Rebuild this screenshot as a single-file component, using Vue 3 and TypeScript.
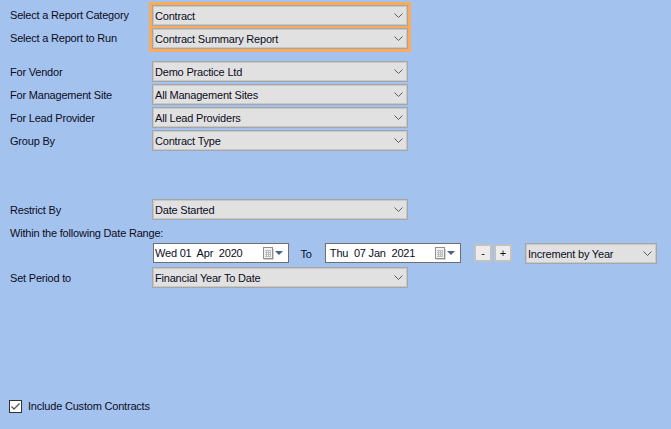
<script setup lang="ts">
import { ref } from "vue";

type Field = { label: string; value: string };

const highlighted: Field[] = [
  { label: "Select a Report Category", value: "Contract" },
  { label: "Select a Report to Run", value: "Contract Summary Report" },
];

const filters: Field[] = [
  { label: "For Vendor", value: "Demo Practice Ltd" },
  { label: "For Management Site", value: "All Management Sites" },
  { label: "For Lead Provider", value: "All Lead Providers" },
  { label: "Group By", value: "Contract Type" },
];

const fromDate = "Wed 01\u00a0 Apr\u00a0 2020";
const toDate = "\u00a0Thu\u00a0 07 Jan\u00a0 2021";

const includeCustom = ref(true);
</script>

<template>
  <div class="page">
    <div class="top">
      <div class="top-labels">
        <div v-for="f in highlighted" :key="f.label" class="label">{{ f.label }}</div>
      </div>
      <div class="highlight">
        <div v-for="f in highlighted" :key="f.label" class="combo">
          <span>{{ f.value }}</span>
          <svg class="chev" width="9" height="5" viewBox="0 0 9 5"><path d="M0.500 0.500 L4.500 4.500 L8.500 0.500" /></svg>
        </div>
      </div>
    </div>

    <div class="filters">
      <div v-for="f in filters" :key="f.label" class="row">
        <div class="label">{{ f.label }}</div>
        <div class="combo">
          <span>{{ f.value }}</span>
          <svg class="chev" width="9" height="5" viewBox="0 0 9 5"><path d="M0.500 0.500 L4.500 4.500 L8.500 0.500" /></svg>
        </div>
      </div>
    </div>

    <div class="restrict">
      <div class="row">
        <div class="label">Restrict By</div>
        <div class="combo">
          <span>Date Started</span>
          <svg class="chev" width="9" height="5" viewBox="0 0 9 5"><path d="M0.500 0.500 L4.500 4.500 L8.500 0.500" /></svg>
        </div>
      </div>
      <div class="label range-label">Within the following Date Range:</div>
      <div class="date-row">
        <div class="date">
          <span class="date-text">{{ fromDate }}</span>
          <svg class="cal" width="20" height="13" viewBox="0 0 20 13">
            <rect x="0.500" y="0.500" width="9" height="11" fill="#f4f4f4" stroke="#8f8f8f" />
            <path d="M2 3.500H8M2 5.500H8M2 7.500H8M2 9.500H8M3.500 3V10M5.500 3V10M7.500 3V10" stroke="#bcbcbc" fill="none" />
            <path d="M10.500 12.500V2M1 12.500H10" stroke="#d4d4d4" fill="none" />
            <path d="M12 4H20L16 8Z" fill="#4a5f86" />
          </svg>
        </div>
        <div class="to">To</div>
        <div class="date">
          <span class="date-text">{{ toDate }}</span>
          <svg class="cal" width="20" height="13" viewBox="0 0 20 13">
            <rect x="0.500" y="0.500" width="9" height="11" fill="#f4f4f4" stroke="#8f8f8f" />
            <path d="M2 3.500H8M2 5.500H8M2 7.500H8M2 9.500H8M3.500 3V10M5.500 3V10M7.500 3V10" stroke="#bcbcbc" fill="none" />
            <path d="M10.500 12.500V2M1 12.500H10" stroke="#d4d4d4" fill="none" />
            <path d="M12 4H20L16 8Z" fill="#4a5f86" />
          </svg>
        </div>
        <button class="step minus">-</button>
        <button class="step plus">+</button>
        <div class="combo increment">
          <span>Increment by Year</span>
          <svg class="chev" width="9" height="5" viewBox="0 0 9 5"><path d="M0.500 0.500 L4.500 4.500 L8.500 0.500" /></svg>
        </div>
      </div>
      <div class="row period">
        <div class="label">Set Period to</div>
        <div class="combo">
          <span>Financial Year To Date</span>
          <svg class="chev" width="9" height="5" viewBox="0 0 9 5"><path d="M0.500 0.500 L4.500 4.500 L8.500 0.500" /></svg>
        </div>
      </div>
    </div>

    <label class="check">
      <span class="box">
        <svg v-if="includeCustom" width="11" height="11" viewBox="0 0 11 11"><path d="M1.500 5.500 L4 8 L9.500 2.500" /></svg>
      </span>
      <span class="check-text">Include Custom Contracts</span>
    </label>
  </div>
</template>

<style>
html,
body {
  margin: 0;
  background: #a4c2ee;
}
</style>

<style scoped>
.page {
  box-sizing: border-box;
  width: 671px;
  height: 429px;
  padding: 2px 0 0 10px;
  display: flex;
  flex-direction: column;
  background: #a4c2ee;
  color: #0c0c1c;
  font-family: "Liberation Sans", Arial, sans-serif;
  font-size: 11px;
  letter-spacing: -0.2px;
  overflow: hidden;
}
.top {
  display: flex;
}
.top-labels {
  width: 139px;
  padding-top: 2px;
  display: flex;
  flex-direction: column;
  gap: 2px;
}
.label {
  height: 21px;
  line-height: 23px;
  white-space: nowrap;
}
.highlight {
  width: 256px;
  padding: 3px;
  display: flex;
  flex-direction: column;
  gap: 2px;
  background: #fdab5a;
}
.combo {
  box-sizing: border-box;
  flex: none;
  width: 256px;
  height: 21px;
  padding: 0 4px 0 2px;
  display: flex;
  align-items: center;
  justify-content: space-between;
  background: #e1e1e1;
  border: 1px solid #a6a6a6;
  box-shadow: inset 0 0 0 1px #c8c8c8;
  white-space: pre;
}
.chev path {
  fill: none;
  stroke: #5c5c5c;
  stroke-width: 1;
}
.filters {
  margin-top: 9px;
  display: flex;
  flex-direction: column;
  gap: 2px;
}
.row {
  display: grid;
  grid-template-columns: 142px 256px;
}
.restrict {
  margin-top: 48px;
}
.range-label {
  margin-top: 2px;
}
.date-row {
  padding-left: 143px;
  display: flex;
  align-items: flex-start;
  height: 21px;
}
.date {
  box-sizing: border-box;
  width: 136px;
  height: 20px;
  padding: 0 5px 0 1px;
  display: flex;
  align-items: center;
  justify-content: space-between;
  background: #fff;
  border: 1px solid #6f6f6f;
}
.date-text {
  white-space: pre;
}
.cal {
  flex: none;
}
.to {
  width: 36px;
  padding-right: 2px;
  box-sizing: border-box;
  text-align: center;
  line-height: 22px;
}
.step {
  box-sizing: border-box;
  width: 18px;
  height: 18px;
  margin-top: 1px;
  padding: 0;
  background: #ececec;
  border: 2px solid #c2c2c2;
  font: inherit;
  line-height: 12px;
  color: #111;
}
.minus {
  margin-left: 13px;
}
.plus {
  margin-left: 2px;
}
.increment {
  width: 132px;
  margin-left: 13px;
}
.period {
  margin-top: 3px;
}
.check {
  margin-top: auto;
  margin-bottom: 16px;
  margin-left: -1px;
  display: flex;
  align-items: flex-start;
  gap: 6px;
  height: 13px;
}
.box {
  box-sizing: border-box;
  width: 13px;
  height: 13px;
  display: flex;
  align-items: center;
  justify-content: center;
  background: #fff;
  border: 1px solid #333;
}
.box path {
  fill: none;
  stroke: #555;
  stroke-width: 1.300;
}
.check-text {
  line-height: 12px;
}
</style>
